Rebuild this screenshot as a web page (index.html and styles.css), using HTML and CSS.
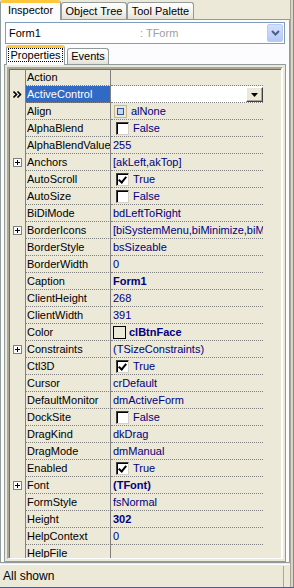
FILE: index.html
```html
<!DOCTYPE html>
<html lang="en">
<head>
  <meta charset="UTF-8" />
  <title>Object Inspector</title>
  <link rel="stylesheet" href="styles.css">
</head>
<body>
  <div class="window">
    <div class="main">
      <div class="panel">
        <div class="tabs">
          <div class="tab active">Inspector</div>
          <div class="tab t-tree">Object Tree</div>
          <div class="tab t-palette">Tool Palette</div>
        </div>

        <div class="sheet">
          <div class="combo">
            <span class="combo-name">Form1</span>
            <span class="combo-type">: TForm</span>
            <span class="combo-btn">
              <svg width="9" height="6" viewBox="0 0 9 6"><path d="M1 1 L4.5 4.5 L8 1" fill="none" stroke="#4d6185" stroke-width="2"/></svg>
            </span>
          </div>

          <div class="subtabs">
            <div class="subtab active"><span class="focus">Properties</span></div>
            <div class="subtab">Events</div>
          </div>

          <div class="subsheet">
            <div class="grid">
              <div class="row"><span class="gutter"></span><span class="name">Action</span><span class="value"></span></div>
              <div class="row selected">
                <span class="gutter">
                  <svg width="9" height="7" viewBox="0 0 9 7"><path d="M0.5 0.5 L3.5 3.5 L0.5 6.5 M4.5 0.5 L7.5 3.5 L4.5 6.5" fill="none" stroke="#000" stroke-width="1.6"/></svg>
                </span>
                <span class="name">ActiveControl</span>
                <span class="value edit"><span class="edit-btn"><svg width="7" height="4" viewBox="0 0 7 4"><path d="M0 0 H7 L3.5 4 Z" fill="#000"/></svg></span></span>
              </div>
              <div class="row"><span class="gutter"></span><span class="name">Align</span>
                <span class="value"><span class="align-ico"><svg width="13" height="13" viewBox="0 0 13 13"><rect x="0.5" y="0.5" width="12" height="12" fill="none" stroke="#a0883c" stroke-dasharray="1 1"/><rect x="3.5" y="3.5" width="6" height="6" fill="#c9d6f2" stroke="#2c4f9e"/></svg></span>alNone</span></div>
              <div class="row"><span class="gutter"></span><span class="name">AlphaBlend</span><span class="value"><span class="check"></span>False</span></div>
              <div class="row"><span class="gutter"></span><span class="name">AlphaBlendValue</span><span class="value">255</span></div>
              <div class="row"><span class="gutter"><span class="plus"></span></span><span class="name">Anchors</span><span class="value">[akLeft,akTop]</span></div>
              <div class="row"><span class="gutter"></span><span class="name">AutoScroll</span><span class="value"><span class="check on"></span>True</span></div>
              <div class="row"><span class="gutter"></span><span class="name">AutoSize</span><span class="value"><span class="check"></span>False</span></div>
              <div class="row"><span class="gutter"></span><span class="name">BiDiMode</span><span class="value">bdLeftToRight</span></div>
              <div class="row"><span class="gutter"><span class="plus"></span></span><span class="name">BorderIcons</span><span class="value">[biSystemMenu,biMinimize,biMaximize]</span></div>
              <div class="row"><span class="gutter"></span><span class="name">BorderStyle</span><span class="value">bsSizeable</span></div>
              <div class="row"><span class="gutter"></span><span class="name">BorderWidth</span><span class="value">0</span></div>
              <div class="row"><span class="gutter"></span><span class="name">Caption</span><span class="value bold">Form1</span></div>
              <div class="row"><span class="gutter"></span><span class="name">ClientHeight</span><span class="value">268</span></div>
              <div class="row"><span class="gutter"></span><span class="name">ClientWidth</span><span class="value">391</span></div>
              <div class="row"><span class="gutter"></span><span class="name">Color</span><span class="value bold"><span class="swatch"></span>clBtnFace</span></div>
              <div class="row"><span class="gutter"><span class="plus"></span></span><span class="name">Constraints</span><span class="value">(TSizeConstraints)</span></div>
              <div class="row"><span class="gutter"></span><span class="name">Ctl3D</span><span class="value"><span class="check on"></span>True</span></div>
              <div class="row"><span class="gutter"></span><span class="name">Cursor</span><span class="value">crDefault</span></div>
              <div class="row"><span class="gutter"></span><span class="name">DefaultMonitor</span><span class="value">dmActiveForm</span></div>
              <div class="row"><span class="gutter"></span><span class="name">DockSite</span><span class="value"><span class="check"></span>False</span></div>
              <div class="row"><span class="gutter"></span><span class="name">DragKind</span><span class="value">dkDrag</span></div>
              <div class="row"><span class="gutter"></span><span class="name">DragMode</span><span class="value">dmManual</span></div>
              <div class="row"><span class="gutter"></span><span class="name">Enabled</span><span class="value"><span class="check on"></span>True</span></div>
              <div class="row"><span class="gutter"><span class="plus"></span></span><span class="name">Font</span><span class="value bold">(TFont)</span></div>
              <div class="row"><span class="gutter"></span><span class="name">FormStyle</span><span class="value">fsNormal</span></div>
              <div class="row"><span class="gutter"></span><span class="name">Height</span><span class="value bold">302</span></div>
              <div class="row"><span class="gutter"></span><span class="name">HelpContext</span><span class="value">0</span></div>
              <div class="row"><span class="gutter"></span><span class="name">HelpFile</span><span class="value"></span></div>
            </div>
          </div>
        </div>

        <div class="status">
          <span class="status-text">All shown</span>
        </div>
      </div>
      <div class="splitter"></div>
    </div>
  </div>
</body>
</html>
```

FILE: styles.css
```css
* { box-sizing: border-box; }
body {
  margin: 0;
  font-family: "Liberation Sans", Arial, sans-serif;
  font-size: 11px;
  color: #000;
  background: #ece9d8;
}
.window {
  width: 294px;
  height: 588px;
  background: #ece9d8;
  border-bottom: 1px solid #2d5ed9;
  display: flex;
  flex-direction: column;
  overflow: hidden;
}
.main { display: flex; flex: 1; min-height: 0; }
.panel { width: 290px; display: flex; flex-direction: column; }
.splitter {
  width: 4px;
  border-left: 1px solid #a9a697;
  border-right: 1px solid #8c8a7e;
  background: #d8d5c8;
}

/* top tabs */
.tabs {
  display: flex;
  align-items: flex-end;
  height: 19px;
  position: relative;
  z-index: 1;
}
.tab {
  height: 17px;
  width: 66px;
  text-align: center;
  line-height: 16px;
  border: 1px solid #919b9c;
  border-bottom: 0;
  border-radius: 3px 3px 0 0;
  background: linear-gradient(#ffffff, #f1f0ea 60%, #e3e1d6);
}
.tab.active {
  width: 61px;
  height: 20px;
  margin-bottom: -1px;
  line-height: 15px;
  border-top: 3px solid #ffc83c;
  background: #fcfcfe;
}
.t-tree { width: 66px; }
.t-palette { width: 67px; }

/* inspector sheet */
.sheet {
  height: 544px;
  border: 1px solid #919b9c;
  background: #fcfcfe;
  padding: 2px 3px 0 3px;
  display: flex;
  flex-direction: column;
}
.combo {
  display: flex;
  align-items: center;
  height: 22px;
  margin-left: 1px;
  width: 280px;
  border: 1px solid #7f9db9;
  background: #fff;
  padding-left: 3px;
}
.combo-name { width: 131px; }
.combo-type { flex: 1; color: #a0a0a0; }
.combo-btn {
  width: 16px;
  height: 18px;
  margin-right: 1px;
  display: flex;
  align-items: center;
  justify-content: center;
  border: 1px solid #b9cbf5;
  border-radius: 2px;
  background: linear-gradient(#d4e0fd, #b5c9f7);
}

/* sub tabs */
.subtabs {
  display: flex;
  align-items: flex-end;
  height: 20px;
  margin-left: 2px;
  position: relative;
  z-index: 1;
}
.subtab {
  height: 16px;
  width: 42px;
  margin-left: 2px;
  text-align: center;
  line-height: 15px;
  border: 1px solid #919b9c;
  border-bottom: 0;
  border-radius: 3px 3px 0 0;
  background: linear-gradient(#ffffff, #f1f0ea 60%, #e3e1d6);
}
.subtab.active {
  width: 59px;
  height: 20px;
  margin-left: 0;
  margin-bottom: -1px;
  border-top: 3px solid #ffc83c;
  background: #fcfcfe;
  line-height: 14px;
}
.focus {
  display: inline-block;
  padding: 0 1px;
  outline: 1px dotted #000;
  line-height: 12px;
}

.subsheet {
  height: 498px;
  border: 1px solid #919b9c;
  background: #ece9d8;
  padding: 2px 2px;
}

/* property grid */
.grid {
  height: 492px;
  border-top: 2px solid #aca899;
  border-left: 2px solid #aca899;
  border-bottom: 1px solid #fff;
  border-right: 2px solid #fff;
  box-shadow: inset 1px 1px 0 #716f64;
  overflow: hidden;
  background: #ece9d8;
}
.row {
  display: flex;
  height: 17px;
  line-height: 16px;
  white-space: nowrap;
}
.gutter {
  width: 17px;
  height: 17px;
  border-right: 1px solid #808080;
  display: flex;
  align-items: center;
  justify-content: center;
  padding-left: 1px;
}
.name {
  width: 85px;
  padding-left: 1px;
  border-right: 1px solid #808080;
  border-bottom: 1px dotted #808080;
  overflow: hidden;
}
.value {
  width: 152px;
  padding-left: 2px;
  color: #000080;
  border-bottom: 1px dotted #808080;
  overflow: hidden;
  display: flex;
  align-items: center;
}
.value.bold { font-weight: bold; }
.selected .name { background: #316ac5; color: #fff; }
.value.edit {
  background: #fff;
  padding: 0;
  justify-content: flex-end;
  align-items: flex-start;
}
.edit-btn {
  width: 17px;
  height: 15px;
  display: flex;
  align-items: center;
  justify-content: center;
  background: #ece9d8;
  border: 1px solid;
  border-color: #fff #404040 #404040 #fff;
  box-shadow: inset -1px -1px 0 #aca899;
  margin-top: 1px;
}
.plus {
  width: 9px;
  height: 9px;
  border: 1px solid #808080;
  background: #fff linear-gradient(#000, #000) center / 5px 1px no-repeat;
  position: relative;
}
.plus::after {
  content: "";
  position: absolute;
  left: 3px;
  top: 1px;
  width: 1px;
  height: 5px;
  background: #000;
}
.check {
  width: 13px;
  height: 13px;
  margin: 0 4px 0 3px;
  border: 1px solid;
  border-color: #404040 #d4d0c8 #d4d0c8 #404040;
  box-shadow: inset 1px 1px 0 #000, inset -1px -1px 0 #fff;
  background: #fff;
  position: relative;
}
.check.on::after {
  content: "";
  position: absolute;
  left: 3px;
  top: 1px;
  width: 3px;
  height: 6px;
  border: solid #000;
  border-width: 0 2px 2px 0;
  transform: rotate(40deg);
}
.align-ico { display: flex; margin: 0 4px 0 1px; }
.swatch {
  width: 13px;
  height: 13px;
  margin-right: 3px;
  border: 1px solid #000;
  background: #ece9d8;
}

/* status bar */
.status {
  flex: 1;
  border-top: 1px solid #fff;
  display: flex;
  align-items: center;
  padding-left: 3px;
  margin-top: 1px;
  font-size: 12px;
}
.status-text {
  flex: 1;
  height: 21px;
  line-height: 20px;
  border-right: 1px solid #aca899;
  margin-right: 6px;
}
```
